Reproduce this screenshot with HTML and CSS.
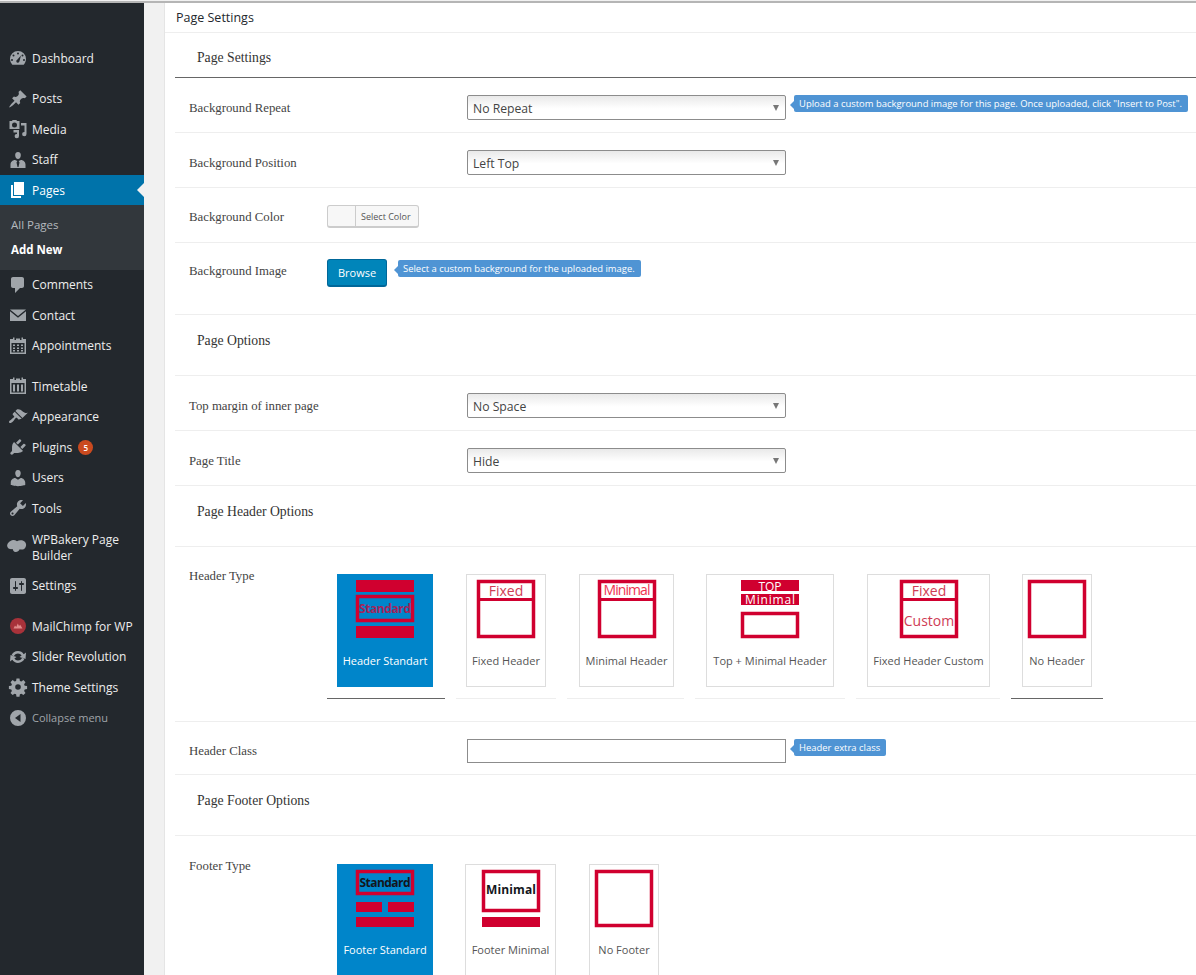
FILE: index.html
```html
<!DOCTYPE html>
<html lang="en">
<head>
<meta charset="utf-8">
<title>Page Settings</title>
<link rel="stylesheet" href="styles.css">
</head>
<body>
<div class="shell">
<nav class="sidebar">
  <a class="item first"><svg class="ic" viewBox="0 0 20 20"><path fill-rule="evenodd" d="M10 3a8 8 0 0 1 8 8c0 2.200-.9 4.200-2.300 5.700H4.300A8 8 0 0 1 2 11a8 8 0 0 1 8-8zM10 4.500a1 1 0 1 0 0 2 1 1 0 0 0 0-2zM5.500 6.500a1 1 0 1 0 0 2 1 1 0 0 0 0-2zM14.500 6.500a1 1 0 1 0 0 2 1 1 0 0 0 0-2zM4 11a1 1 0 1 0 0 2 1 1 0 0 0 0-2zM16 11a1 1 0 1 0 0 2 1 1 0 0 0 0-2zM13 7.500l-3.800 4.200a1.600 1.600 0 1 0 2.300 1.400z"/></svg><span>Dashboard</span></a>
  <a class="item sep"><svg class="ic" viewBox="0 0 20 20"><path d="M10.440 3.020l1.820-1.820 6.360 6.350-1.830 1.820c-1.050-.68-2.480-.57-3.410.36l-.75.75c-.92.93-1.040 2.350-.35 3.410l-1.830 1.820-2.410-2.410-2.800 2.790c-.42.42-3.380 2.710-3.800 2.290s1.860-3.390 2.280-3.810l2.790-2.790L4.100 9.360l1.830-1.820c1.050.69 2.480.57 3.400-.36l.75-.75c.93-.92 1.050-2.350.36-3.410z"/></svg><span>Posts</span></a>
  <a class="item"><svg class="ic" viewBox="0 0 20 20"><path fill-rule="evenodd" d="M1.500 2h2.500l.6-1h3.800l.6 1h2.500v8H1.500zM6.500 3.500a2.500 2.500 0 1 0 0 5 2.500 2.500 0 0 0 0-5zM13 4h5.500v11a2.200 2.200 0 1 1-2-2.100V6.500H13zM5.500 11h5.500v6a2.200 2.200 0 1 1-2-2.100v-1.400H5.500z"/></svg><span>Media</span></a>
  <a class="item"><svg class="ic" viewBox="0 0 20 20"><path fill-rule="evenodd" d="M10 2c2 0 3 1.600 2.800 3.400C12.600 7.400 11.600 9 10 9S7.400 7.400 7.200 5.400C7 3.600 8 2 10 2zM7 10l2.300 1-.8 1.400 1 4.600h1l1-4.600-.8-1.400L13 10c2.500 0 4.500 2.300 4.500 4.500V18h-15v-3.500C2.500 12.300 4.500 10 7 10z"/></svg><span>Staff</span></a>
  <div class="group">
    <a class="item current"><svg class="ic" viewBox="0 0 20 20"><path d="M6 15V2h10v13H6zm-1 1h8v2H3V5h2v11z"/></svg><span>Pages</span></a>
    <div class="sub">
      <a class="sublink">All Pages</a>
      <a class="sublink active">Add New</a>
    </div>
  </div>
  <a class="item"><svg class="ic" viewBox="0 0 20 20"><path d="M5 2h9c1.100 0 2 .9 2 2v7c0 1.100-.9 2-2 2h-2l-5 5v-5H5c-1.100 0-2-.9-2-2V4c0-1.100.9-2 2-2z"/></svg><span>Comments</span></a>
  <a class="item"><svg class="ic" viewBox="0 0 20 20"><path d="M2 4.500h16L10 11zM2 6.300V16h16V6.300l-8 6.500z"/></svg><span>Contact</span></a>
  <a class="item"><svg class="ic" viewBox="0 0 20 20"><path fill-rule="evenodd" d="M5 1.500h1.500V4H8V2.500h4V4h1.500V1.500H15V3h3v15H2V3h3zM3.500 7v9.500h13V7zM5 8.500h2V10H5zM9 8.500h2V10H9zM13 8.500h2V10h-2zM5 11.500h2V13H5zM9 11.500h2V13H9zM13 11.500h2V13h-2zM5 14h2v1.500H5zM9 14h2v1.500H9zM13 14h2v1.500h-2z"/></svg><span>Appointments</span></a>
  <a class="item sep"><svg class="ic" viewBox="0 0 20 20"><path fill-rule="evenodd" d="M5 1.500h1.500V4H8V2.500h4V4h1.500V1.500H15V3h3v15H2V3h3zM3.500 7v9.500h13V7zM5 8.500h2v7H5zM9 8.500h2v7H9zM13 8.500h2v7h-2z"/></svg><span>Timetable</span></a>
  <a class="item"><svg class="ic" viewBox="0 0 20 20"><path d="M14.480 11.060L7.410 3.990l1.500-1.500c.5-.56 2.300-.47 3.510.32 1.210.8 1.430 1.280 2.910 2.100 1.180.64 2.450 1.260 4.450.85zm-.71.71L6.700 4.700 4.930 6.470c-.39.39-.39 1.020 0 1.410l1.060 1.060c.39.39.39 1.030 0 1.420-.6.6-1.430 1.110-2.210 1.690-.35.26-.7.53-1.010.84C1.430 13.230.4 14.850 1.310 15.760c.9.91 2.530-.12 3.870-1.460.31-.31.58-.66.85-1.020.57-.78 1.080-1.610 1.690-2.210.39-.39 1.020-.39 1.410 0l1.060 1.060c.39.39 1.020.39 1.410 0z"/></svg><span>Appearance</span></a>
  <a class="item"><svg class="ic" viewBox="0 0 20 20"><path d="M13.110 4.360L9.870 7.600 8 5.730l3.240-3.240c.35-.34 1.050-.2 1.560.32.52.51.66 1.210.31 1.550zm-8 1.770l.91-1.120 9.010 9.010-1.190.84c-.71.71-2.630 1.160-3.820 1.160H6.140L4.900 17.260c-.59.59-1.540.59-2.120 0-.59-.58-.59-1.530 0-2.120l1.240-1.240v-3.880c0-1.130.4-3.190 1.090-3.890zm7.260 3.970l3.240-3.240c.34-.35 1.040-.21 1.550.31.52.51.66 1.210.31 1.550l-3.240 3.250z"/></svg><span>Plugins</span><b class="badge">5</b></a>
  <a class="item"><svg class="ic" viewBox="0 0 20 20"><path d="M10 9.250c-2.270 0-2.730-3.440-2.730-3.440C7 4.020 7.820 2 9.970 2c2.160 0 2.980 2.020 2.710 3.810 0 0-.41 3.440-2.680 3.440zm0 2.570L12.720 10c2.390 0 4.520 2.330 4.520 4.530v2.490s-3.650 1.130-7.240 1.130c-3.650 0-7.240-1.130-7.240-1.130v-2.490c0-2.250 1.940-4.480 4.470-4.480z"/></svg><span>Users</span></a>
  <a class="item"><svg class="ic" viewBox="0 0 20 20"><path d="M16.680 9.770c-1.340 1.340-3.300 1.670-4.950.99l-5.410 6.520c-.99.99-2.590.99-3.580 0s-.99-2.590 0-3.570l6.520-5.420c-.68-1.650-.35-3.610.99-4.950 1.280-1.280 3.120-1.620 4.720-1.060l-2.890 2.890 2.820 2.820 2.860-2.870c.53 1.580.18 3.390-1.080 4.670zM3.810 16.210c.4.39 1.040.39 1.430 0 .4-.4.4-1.040 0-1.430-.39-.4-1.030-.4-1.430 0-.39.39-.39 1.030 0 1.430z"/></svg><span>Tools</span></a>
  <a class="item tall"><svg class="ic wide" viewBox="0 0 20 20"><path d="M3.500 3c2-1.500 4.500-1 6.500.2 2.200-1.300 5.800-1.200 7.500.4 2.300 2 2 5.200.2 6.800-1.500 1.300-3.300 1.400-5 .9-1 1.800-2.500 2.900-4.200 2.700-1.700-.2-2.500-1.500-2.900-3-2.100.4-4 0-5-1.800C-.6 7 1 4.500 3.500 3z"/></svg><span>WPBakery Page Builder</span></a>
  <a class="item"><svg class="ic" viewBox="0 0 20 20"><path d="M18 16V4c0-1.100-.9-2-2-2H4c-1.100 0-2 .9-2 2v12c0 1.100.9 2 2 2h12c1.100 0 2-.9 2-2zM8 11h1c.55 0 1 .45 1 1s-.45 1-1 1H8v1.500c0 .28-.22.5-.5.5s-.5-.22-.5-.5V13H6c-.55 0-1-.45-1-1s.45-1 1-1h1V5.500c0-.28.22-.5.5-.5s.5.22.5.5V11zm5-2h-1c-.55 0-1-.45-1-1s.45-1 1-1h1V5.500c0-.28.22-.5.5-.5s.5.22.5.5V7h1c.55 0 1 .45 1 1s-.45 1-1 1h-1v5.500c0 .28-.22.5-.5.5s-.5-.22-.5-.5V9z"/></svg><span>Settings</span></a>
  <a class="item sep"><svg class="ic" viewBox="0 0 20 20"><circle class="mc-bg" cx="10" cy="10" r="8"/><path class="mc-fg" d="M5.500 12.500l1.500-3 1.200 1.500L9.800 7.500 11 10l1.200-1.200 2.300 3.700z"/></svg><span>MailChimp for WP</span></a>
  <a class="item"><svg class="ic" viewBox="0 0 20 20"><path fill-rule="evenodd" d="M10 4c2.400 0 4.500 1.200 5.700 3.200L18 5.500 17.500 12l-6-2 2.100-1.500C12.800 7.300 11.500 6.500 10 6.500c-1.900 0-3.500 1.200-4.200 2.800L3.300 8.700C4.300 6 6.900 4 10 4zM2.500 8l6 2-2.100 1.500c.8 1.200 2.100 2 3.600 2 1.900 0 3.500-1.200 4.200-2.800l2.500.6C15.700 14 13.100 16 10 16c-2.400 0-4.500-1.200-5.700-3.200L2 14.500z"/></svg><span>Slider Revolution</span></a>
  <a class="item"><svg class="ic" viewBox="0 0 20 20"><path fill-rule="evenodd" d="M8.500 1.500h3l.4 2.400 1.500.6 2-1.400 2.100 2.100-1.400 2 .6 1.500 2.400.4v3l-2.400.4-.6 1.500 1.400 2-2.100 2.100-2-1.400-1.500.6-.4 2.400h-3l-.4-2.400-1.500-.6-2 1.400-2.100-2.100 1.400-2-.6-1.500-2.400-.4v-3l2.400-.4.6-1.500-1.400-2 2.100-2.100 2 1.400 1.500-.6zM10 7.200a2.800 2.800 0 1 0 0 5.600 2.800 2.800 0 0 0 0-5.600z"/></svg><span>Theme Settings</span></a>
  <a class="item collapse"><svg class="ic" viewBox="0 0 20 20"><path fill-rule="evenodd" d="M10 2a8 8 0 1 1 0 16 8 8 0 0 1 0-16zM12.500 6L7 10l5.500 4z"/></svg><span>Collapse menu</span></a>
</nav>

<main class="content">
  <div class="title">Page Settings</div>

  <section class="body">
    <h2 class="head head-line">Page Settings</h2>

    <div class="row r55 top"><label>Background Repeat</label>
      <div class="field"><div class="select"><span>No Repeat</span><i></i></div>
      <div class="tip">Upload a custom background image for this page. Once uploaded, click "Insert to Post".</div></div></div>
    <div class="row r55 top"><label>Background Position</label>
      <div class="field"><div class="select"><span>Left Top</span><i></i></div></div></div>
    <div class="row r55 color"><label>Background Color</label>
      <div class="picker"><span class="swatch"></span><span class="pick">Select Color</span></div></div>
    <div class="row r72 image"><label>Background Image</label>
      <div class="browse">Browse</div><div class="tip tip-b">Select a custom background for the uploaded image.</div></div>

    <h2 class="head h61">Page Options</h2>
    <div class="row r55 top"><label>Top margin of inner page</label>
      <div class="field"><div class="select"><span>No Space</span><i></i></div></div></div>
    <div class="row r55 top"><label>Page Title</label>
      <div class="field"><div class="select"><span>Hide</span><i></i></div></div></div>

    <h2 class="head h61">Page Header Options</h2>
    <div class="row chooser"><label>Header Type</label>
      <div class="options">
        <div class="opt o1 on"><div class="card selected">
          <svg viewBox="0 0 58 58"><rect class="fill" width="58" height="12"/><rect class="frame" x="1.500" y="16.500" width="55" height="24"/><text class="txt bold dim" x="29" y="33" textLength="52">Standard</text><rect class="fill" y="46" width="58" height="12"/></svg>
          <p>Header Standart</p></div></div>
        <div class="opt o2"><div class="card">
          <svg viewBox="0 0 58 58"><rect class="frame" x="1.500" y="1.500" width="55" height="55"/><rect class="fill" y="18" width="58" height="3"/><text class="txt" x="29" y="16">Fixed</text></svg>
          <p>Fixed Header</p></div></div>
        <div class="opt o3"><div class="card">
          <svg viewBox="0 0 58 58"><rect class="frame" x="1.500" y="1.500" width="55" height="55"/><rect class="fill" y="18" width="58" height="3"/><text class="txt bright" x="29" y="15" textLength="47">Minimal</text></svg>
          <p>Minimal Header</p></div></div>
        <div class="opt o4"><div class="card">
          <svg viewBox="0 0 58 58"><rect class="fill" width="58" height="11"/><rect class="fill" y="14" width="58" height="11"/><text class="txt white small" x="29" y="10.500">TOP</text><text class="txt white small" x="29" y="24" textLength="50">Minimal</text><rect class="frame" x="1.500" y="33.500" width="55" height="23"/></svg>
          <p>Top + Minimal Header</p></div></div>
        <div class="opt o5"><div class="card">
          <svg viewBox="0 0 58 58"><rect class="frame" x="1.500" y="1.500" width="55" height="55"/><rect class="fill" y="18" width="58" height="3"/><text class="txt" x="29" y="16">Fixed</text><text class="txt" x="29" y="46">Custom</text></svg>
          <p>Fixed Header Custom</p></div></div>
        <div class="opt o6 on"><div class="card">
          <svg viewBox="0 0 58 58"><rect class="frame" x="1.500" y="1.500" width="55" height="55"/></svg>
          <p>No Header</p></div></div>
      </div>
    </div>
    <div class="row r53 top-input"><label>Header Class</label>
      <div class="field"><div class="input"></div><div class="tip">Header extra class</div></div></div>

    <h2 class="head h61">Page Footer Options</h2>
    <div class="row chooser foot-row"><label>Footer Type</label>
      <div class="options foot">
        <div class="opt f1"><div class="card selected">
          <svg viewBox="0 0 58 58"><rect class="frame" x="1.500" y="1.500" width="55" height="22"/><text class="txt bold dark" x="29" y="17" textLength="51">Standard</text><rect class="fill" y="32" width="26" height="10"/><rect class="fill" x="32" y="32" width="26" height="10"/><rect class="fill" y="47" width="58" height="10"/></svg>
          <p>Footer Standard</p></div></div>
        <div class="opt f2"><div class="card">
          <svg viewBox="0 0 58 58"><rect class="frame" x="1.500" y="1.500" width="55" height="39"/><rect class="fill" y="47" width="58" height="10"/><text class="txt bold dark" x="29" y="24" textLength="50">Minimal</text></svg>
          <p>Footer Minimal</p></div></div>
        <div class="opt f3"><div class="card">
          <svg viewBox="0 0 58 58"><rect class="frame" x="1.500" y="1.500" width="55" height="54"/></svg>
          <p>No Footer</p></div></div>
      </div>
    </div>
  </section>
</main>
</div>
</body>
</html>
```
FILE: styles.css
```css
* { box-sizing: border-box; }
html, body { margin: 0; padding: 0; height: 100%; overflow: hidden; }
body { background: #f1f1f1; font-family: "Open Sans", sans-serif; color: #444; }
.shell { display: flex; height: 975px; border-top: 2px solid #b5b5b5; margin-top: 1px; }

.sidebar { width: 144px; flex: none; background: #23282d; padding-top: 40px; font-size: 12px; }
.item { display: flex; align-items: center; height: 30.500px; padding-left: 8px; color: #eee; }
.item span { margin-left: 4px; }
.item.sep { margin-top: 10px; }
.item.tall { height: 47px; line-height: 16px; padding-top: 1px; }
.item.tall span { width: 100px; }
.ic { width: 20px; height: 20px; fill: #a0a5aa; flex: none; }
.ic.wide { width: 22px; margin-left: -2px; }
.current { background: #0073aa; color: #fff; position: relative; height: 30px; }
.current .ic { fill: #fff; }
.current::after { content: ""; position: absolute; right: 0; top: 8px; border: 7px solid transparent; border-right-color: #f1f1f1; border-left-width: 0; }
.group { display: block; }
.sub { background: #32373c; height: 64.500px; padding: 7px 0 0 11px; }
.sublink { display: block; height: 25px; line-height: 25px; font-size: 11.500px; color: #b4b9be; }
.sublink.active { color: #fff; font-weight: 700; }
.badge { margin-left: 6px; width: 15px; height: 15px; border-radius: 50%; background: #ca4a1f; color: #fff; font-size: 8px; line-height: 15px; text-align: center; font-weight: 600; }
.collapse { color: #a0a5aa; font-size: 11px; }
.mc-bg { fill: #a8323a; }
.mc-fg { fill: #e08a8a; }

.content { margin-left: 20px; flex: 1; background: #fff; border-left: 1px solid #e5e5e5; min-width: 0; }
.title { height: 30px; line-height: 30px; padding-left: 11px; font-size: 12.500px; color: #23282d; border-bottom: 1px solid #eee; }
.body { padding-left: 10px; }
.head { margin: 0; padding-left: 22px; font: 400 13.700px "Liberation Serif", serif; color: #333; display: flex; align-items: center; }
.head-line { height: 45px; padding-top: 6px; border-bottom: 1px solid #666; }
.h61 { height: 61px; padding-bottom: 9px; border-bottom: 1px solid #eee; }

.row { display: flex; border-bottom: 1px solid #eee; padding-left: 14px; position: relative; }
.row label { font: 12.800px "Liberation Serif", serif; color: #444; width: 278px; flex: none; }
.top label { padding-top: 6px; }
.top-input label { padding-top: 5px; }
.r55 { height: 55px; }
.r53 { height: 53px; }
.r72 { height: 72px; }
.top { padding-top: 17px; }
.field { display: flex; align-items: flex-start; gap: 8px; }
.select { width: 319px; height: 25px; border: 1px solid #8c8c8c; border-radius: 2px; background: linear-gradient(#e9e9e9, #fff 55%); font-size: 12.200px; line-height: 25px; padding-left: 5px; position: relative; color: #444; }
.select i { position: absolute; right: 6px; top: 9px; border: 3px solid transparent; border-top: 6px solid #777; border-bottom: 0; }
.tip { background: #4f94d4; color: #fff; font-size: 9.450px; line-height: 17px; padding: 0 6px 0 5px; border-radius: 2px; position: relative; white-space: nowrap; margin-top: 0; }
.tip::before { content: ""; position: absolute; left: -4px; top: 6px; border: 4px solid transparent; border-right-color: #4f94d4; border-left: 0; }

.color { padding-top: 21px; }
.color label { width: 138px; padding-top: 1px; }
.picker { display: flex; width: 92px; height: 23px; margin-top: -4px; border: 1px solid #ccc; border-bottom-width: 2px; border-radius: 3px; background: #f7f7f7; }
.swatch { width: 28px; border-right: 1px solid #ccc; }
.pick { font-size: 9px; line-height: 21px; padding-left: 5px; color: #555; }
.image { padding-top: 20px; }
.image label { width: 138px; padding-top: 1px; }
.browse { width: 60px; height: 28px; margin-top: -4px; background: #0085ba; border: 1px solid #006799; border-bottom-width: 2px; border-radius: 3px; color: #fff; font-size: 11px; line-height: 26px; text-align: center; }
.tip-b { margin: -3px 0 0 11px; height: 17px; }

.top-input { padding-top: 17px; }
.input { width: 319px; height: 24px; border: 1px solid #8c8c8c; background: #fff; }

.chooser { height: 175px; padding-top: 22px; }
.chooser label { width: 138px; }
.options { display: flex; gap: 11px; align-items: flex-start; margin-top: 5px; }
.foot-row label { padding-top: 1px; }
.options.foot { margin-top: 6px; }
.opt { height: 125px; padding: 0 10px; border-bottom: 1px solid #eee; }
.opt.on { border-bottom-color: #666; }
.o1 { width: 118px; padding-right: 12px; }
.o2 { width: 100px; }
.o3 { width: 117px; padding-left: 12px; }
.o4 { width: 150px; padding: 0 11px; }
.o5 { width: 144px; padding-left: 11px; }
.o6 { width: 92px; padding: 0 11px; }
.card { height: 113px; border: 1px solid #ddd; background: #fff; text-align: center; padding-top: 5px; }
.card svg { width: 58px; height: 58px; display: block; margin: 0 auto; overflow: visible; }
.card p { margin: 15px 0 0; font-size: 11px; line-height: 16px; color: #555; white-space: nowrap; }
.selected { background: #0085ca; border-color: #0085ca; }
.selected p { color: #fff; }
.frame { fill: none; stroke: #d0002f; stroke-width: 3.500; }
.fill { fill: #d0002f; }
.txt { font-family: "Open Sans", sans-serif; font-size: 14px; fill: #cf3c55; text-anchor: middle; }
.small { font-size: 12px; }
.bold { font-weight: 700; font-size: 12px; }
.dim { fill: #a3245a; }
.dark { fill: #14161c; }
.bright { fill: #ee3350; }
.white { fill: #fff; }
.foot .opt { border: 0; }
.foot .card { height: 130px; }
.foot .card p { margin-top: 14px; }
.f1 { width: 116px; }
.f2 { width: 111px; margin-left: 1px; }
.f3 { width: 90px; margin-left: 2px; }
```
